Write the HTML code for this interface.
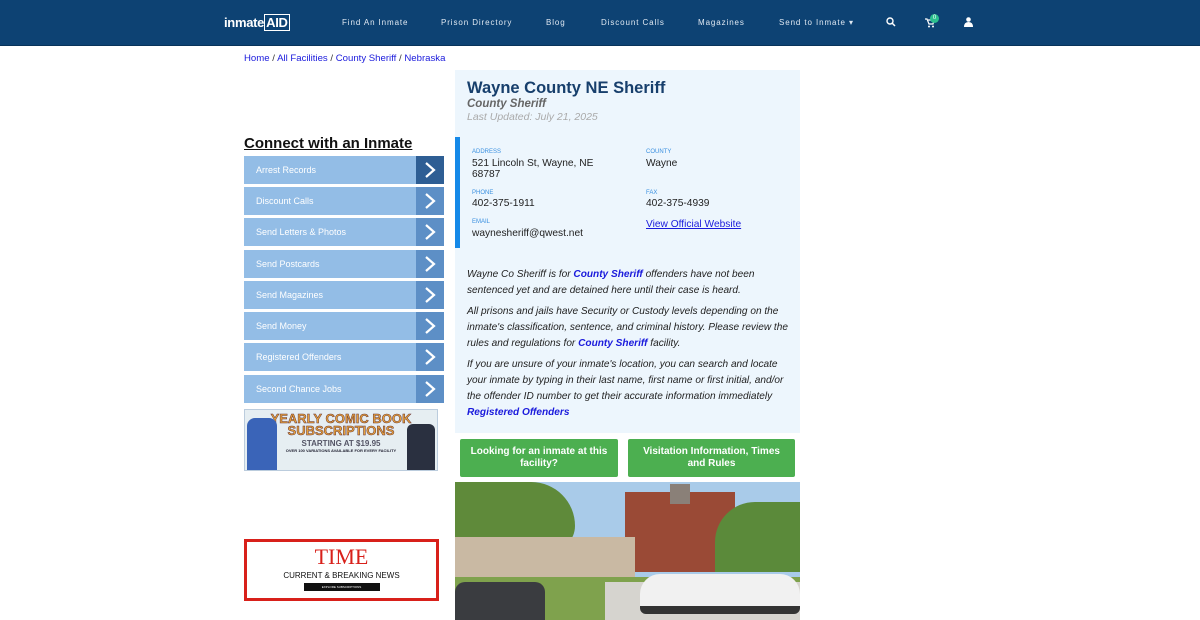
<!DOCTYPE html>
<html><head><meta charset="utf-8"><style>
*{margin:0;padding:0;box-sizing:border-box}
body{width:1200px;height:620px;overflow:hidden;background:#fff;font-family:"Liberation Sans",sans-serif;position:relative}
.nav{position:absolute;left:0;top:0;width:1200px;height:46px;background:#0d4273;border-bottom:1px solid #08335a}
.nav a{position:absolute;top:18px;color:#dfe8f2;font-size:8px;letter-spacing:0.9px;text-decoration:none}
.logo{position:absolute;left:224px;top:15px;color:#fff;font-weight:bold;font-size:13px;letter-spacing:-0.3px}
.bc{position:absolute;left:244px;top:53px;font-size:9.6px;color:#333}
.bc a{color:#1a1adc;text-decoration:none}
.side h2{position:absolute;left:244px;top:135px;font-size:15px;font-weight:bold;text-decoration:underline;color:#111}
.item{position:absolute;left:244px;width:200px;height:28px;background:#93bde6;color:#fff;font-size:9px;line-height:28px;padding-left:12px}
.item span{position:absolute;right:0;top:0;width:28px;height:28px;background:#5d8fc6}
.item span svg{position:absolute;left:7px;top:5px}
.main{position:absolute;left:455px;top:70px;width:345px;height:363px;background:#edf6fd}
h1{position:absolute;left:12px;top:9px;font-size:16.5px;color:#173f6c}
.sub{position:absolute;left:12px;top:28px;font-size:11.5px;font-style:italic;font-weight:bold;color:#666}
.upd{position:absolute;left:12px;top:41px;font-size:10.5px;font-style:italic;color:#aaa}
.bar{position:absolute;left:0;top:67px;width:5px;height:111px;background:#1589e8}
.lbl{position:absolute;font-size:6px;color:#3a90e0}
.val{position:absolute;font-size:10.2px;color:#222;line-height:11px}
.txt{position:absolute;left:12px;font-size:10.1px;font-style:italic;color:#222;line-height:16px;width:325px}
.txt b{color:#1a1adc}
.btn{position:absolute;top:439px;height:38px;background:#4caf50;color:#fff;font-size:10px;font-weight:bold;text-align:center;line-height:12px;padding:7px 8px 0;border-radius:2px}
</style></head><body>
<div class="nav">
<div class="logo">inmate<span style="border:1px solid #fff;padding:0 1px">AID</span></div>
<a style="left:342px">Find An Inmate</a><a style="left:441px">Prison Directory</a><a style="left:546px">Blog</a><a style="left:601px">Discount Calls</a><a style="left:698px">Magazines</a><a style="left:779px">Send to Inmate ▾</a>
<svg style="position:absolute;left:886px;top:17px" width="10" height="10"><circle cx="4" cy="4" r="3" fill="none" stroke="#fff" stroke-width="1.4"/><path d="M6 6L9 9" stroke="#fff" stroke-width="1.5"/></svg>
<svg style="position:absolute;left:925px;top:18px" width="10" height="10"><path d="M0 1h2l2 5h4l1-4H3" fill="none" stroke="#fff" stroke-width="1.2"/><circle cx="4" cy="8.5" r="1" fill="#fff"/><circle cx="8" cy="8.5" r="1" fill="#fff"/></svg>
<div style="position:absolute;left:930px;top:14px;width:9px;height:9px;border-radius:50%;background:#2bbf8e;color:#fff;font-size:6px;text-align:center;line-height:9px">0</div>
<svg style="position:absolute;left:964px;top:17px" width="9" height="10"><circle cx="4.5" cy="2.5" r="2.3" fill="#fff"/><path d="M0 10q0-5 4.5-5t4.5 5z" fill="#fff"/></svg>
</div>
<div class="bc"><a>Home</a> / <a>All Facilities</a> / <a>County Sheriff</a> / <a>Nebraska</a></div>
<div class="side"><h2>Connect with an Inmate</h2></div>
<div class="item" style="top:156px">Arrest Records<span style="background:#2e5e94"><svg width="14" height="18"><path d="M3 2l8 7-8 7" fill="none" stroke="#fff" stroke-width="2.2"/></svg></span></div>
<div class="item" style="top:187px">Discount Calls<span><svg width="14" height="18"><path d="M3 2l8 7-8 7" fill="none" stroke="#fff" stroke-width="2.2"/></svg></span></div>
<div class="item" style="top:218px">Send Letters &amp; Photos<span><svg width="14" height="18"><path d="M3 2l8 7-8 7" fill="none" stroke="#fff" stroke-width="2.2"/></svg></span></div>
<div class="item" style="top:250px">Send Postcards<span><svg width="14" height="18"><path d="M3 2l8 7-8 7" fill="none" stroke="#fff" stroke-width="2.2"/></svg></span></div>
<div class="item" style="top:281px">Send Magazines<span><svg width="14" height="18"><path d="M3 2l8 7-8 7" fill="none" stroke="#fff" stroke-width="2.2"/></svg></span></div>
<div class="item" style="top:312px">Send Money<span><svg width="14" height="18"><path d="M3 2l8 7-8 7" fill="none" stroke="#fff" stroke-width="2.2"/></svg></span></div>
<div class="item" style="top:343px">Registered Offenders<span><svg width="14" height="18"><path d="M3 2l8 7-8 7" fill="none" stroke="#fff" stroke-width="2.2"/></svg></span></div>
<div class="item" style="top:375px">Second Chance Jobs<span><svg width="14" height="18"><path d="M3 2l8 7-8 7" fill="none" stroke="#fff" stroke-width="2.2"/></svg></span></div>
<div style="position:absolute;left:244px;top:409px;width:194px;height:62px;background:#e6eef2;border:1px solid #bcd;text-align:center;font-weight:bold;overflow:hidden">
<div style="position:absolute;left:2px;top:8px;width:30px;height:54px;background:#3a64b8;border-radius:8px 8px 0 0"></div>
<div style="position:absolute;right:2px;top:14px;width:28px;height:48px;background:#2a3040;border-radius:6px 6px 0 0"></div>
<div style="color:#e6a23c;font-size:13px;line-height:12px;margin-top:3px;-webkit-text-stroke:0.5px #633">YEARLY COMIC BOOK<br>SUBSCRIPTIONS</div>
<div style="color:#556;font-size:8px;margin-top:2px">STARTING AT $19.95</div>
<div style="color:#223;font-size:4px">OVER 100 VARIATIONS AVAILABLE FOR EVERY FACILITY</div></div>
<div style="position:absolute;left:244px;top:539px;width:195px;height:62px;border:3px solid #d8201a;text-align:center">
<div style="font-family:'Liberation Serif',serif;color:#d8201a;font-size:22px;line-height:22px;margin-top:4px">TIME</div>
<div style="font-size:8px;color:#111;margin-top:3px">CURRENT &amp; BREAKING NEWS</div>
<div style="width:76px;height:8px;background:#111;margin:3px auto 0;color:#fff;font-size:3px;line-height:8px">EXPLORE SUBSCRIPTIONS</div></div>
<div class="main">
<h1>Wayne County NE Sheriff</h1>
<div class="sub">County Sheriff</div>
<div class="upd">Last Updated: July 21, 2025</div>
<div class="bar"></div>
<div class="lbl" style="left:17px;top:79px">ADDRESS</div><div class="val" style="left:17px;top:88px">521 Lincoln St, Wayne, NE<br>68787</div>
<div class="lbl" style="left:191px;top:79px">COUNTY</div><div class="val" style="left:191px;top:88px">Wayne</div>
<div class="lbl" style="left:17px;top:120px">PHONE</div><div class="val" style="left:17px;top:128px">402-375-1911</div>
<div class="lbl" style="left:191px;top:120px">FAX</div><div class="val" style="left:191px;top:128px">402-375-4939</div>
<div class="lbl" style="left:17px;top:149px">EMAIL</div><div class="val" style="left:17px;top:158px">waynesheriff@qwest.net</div>
<div class="val" style="left:191px;top:149px;color:#1a1adc;text-decoration:underline">View Official Website</div>
<div class="txt" style="top:197px">Wayne Co Sheriff is for <b>County Sheriff</b> offenders have not been sentenced yet and are detained here until their case is heard.</div>
<div class="txt" style="top:234px">All prisons and jails have Security or Custody levels depending on the inmate's classification, sentence, and criminal history. Please review the rules and regulations for <b>County Sheriff</b> facility.</div>
<div class="txt" style="top:287px">If you are unsure of your inmate's location, you can search and locate your inmate by typing in their last name, first name or first initial, and/or the offender ID number to get their accurate information immediately <b>Registered Offenders</b></div>
</div>
<div class="btn" style="left:460px;width:158px">Looking for an inmate at this facility?</div>
<div class="btn" style="left:628px;width:167px">Visitation Information, Times and Rules</div>
<div style="position:absolute;left:455px;top:482px;width:345px;height:138px;background:#a9cbe9;overflow:hidden">
<div style="position:absolute;left:0;top:0;width:120px;height:70px;background:#5f8a3a;border-radius:0 50px 30px 0"></div>
<div style="position:absolute;left:170px;top:10px;width:110px;height:80px;background:#9a4a36"></div>
<div style="position:absolute;left:215px;top:2px;width:20px;height:20px;background:#8a8078"></div>
<div style="position:absolute;left:260px;top:20px;width:85px;height:70px;background:#5b8a3a;border-radius:40px 0 0 0"></div>
<div style="position:absolute;left:0;top:55px;width:180px;height:45px;background:#c9b9a3"></div>
<div style="position:absolute;left:0;top:95px;width:345px;height:43px;background:#7fa24d"></div>
<div style="position:absolute;left:150px;top:100px;width:195px;height:38px;background:#d6d4cf"></div>
<div style="position:absolute;left:0;top:100px;width:90px;height:38px;background:#3a3c40;border-radius:10px 10px 0 0"></div>
<div style="position:absolute;left:185px;top:92px;width:160px;height:40px;background:#f1f1f1;border-radius:20px 20px 6px 6px;border-bottom:8px solid #333"></div>
</div>
</body></html>
